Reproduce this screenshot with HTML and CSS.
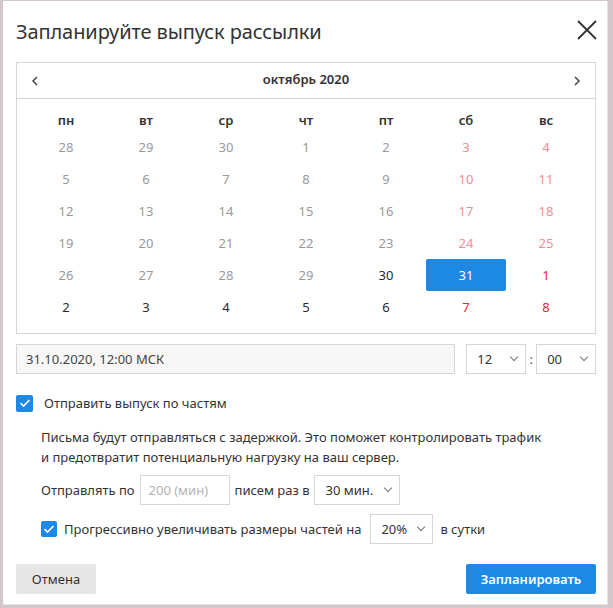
FILE: index.html
```html
<!DOCTYPE html>
<html lang="ru">
<head>
<meta charset="utf-8">
<link rel="stylesheet" href="styles.css">
</head>
<body>
<div class="frame">
  <div class="dialog">
    <div class="head">
      <h1 class="title">Запланируйте выпуск рассылки</h1>
      <svg class="close" width="22" height="22" viewBox="0 0 22 22"><path d="M2 2L20 20M20 2L2 20" stroke="#333" stroke-width="1.8" fill="none"/></svg>
    </div>
    <div class="cal">
      <div class="cal-head">
        <svg class="arr" width="8" height="10" viewBox="0 0 8 10"><path d="M6 1L2 5L6 9" stroke="#444" stroke-width="1.5" fill="none"/></svg>
        <span class="month">октябрь 2020</span>
        <svg class="arr" width="8" height="10" viewBox="0 0 8 10"><path d="M2 1L6 5L2 9" stroke="#444" stroke-width="1.5" fill="none"/></svg>
      </div>
      <div class="grid">
        <div class="wd">пн</div><div class="wd">вт</div><div class="wd">ср</div><div class="wd">чт</div><div class="wd">пт</div><div class="wd">сб</div><div class="wd">вс</div>
        <div class="d off">28</div><div class="d off">29</div><div class="d off">30</div><div class="d off">1</div><div class="d off">2</div><div class="d offw">3</div><div class="d offw">4</div>
        <div class="d off">5</div><div class="d off">6</div><div class="d off">7</div><div class="d off">8</div><div class="d off">9</div><div class="d offw">10</div><div class="d offw">11</div>
        <div class="d off">12</div><div class="d off">13</div><div class="d off">14</div><div class="d off">15</div><div class="d off">16</div><div class="d offw">17</div><div class="d offw">18</div>
        <div class="d off">19</div><div class="d off">20</div><div class="d off">21</div><div class="d off">22</div><div class="d off">23</div><div class="d offw">24</div><div class="d offw">25</div>
        <div class="d off">26</div><div class="d off">27</div><div class="d off">28</div><div class="d off">29</div><div class="d">30</div><div class="d sel">31</div><div class="d we">1</div>
        <div class="d">2</div><div class="d">3</div><div class="d">4</div><div class="d">5</div><div class="d">6</div><div class="d we">7</div><div class="d we">8</div>
      </div>
    </div>
    <div class="dt-row">
      <div class="dt-input">31.10.2020, 12:00 МСК</div>
      <div class="sel-box hh">12<span class="chev"></span></div>
      <span class="colon">:</span>
      <div class="sel-box mm">00<span class="chev"></span></div>
    </div>
    <label class="chk-row">
      <span class="chk"><svg width="12" height="10" viewBox="0 0 12 10"><path d="M1.5 5L4.5 8L10.5 2" stroke="#fff" stroke-width="1.6" fill="none"/></svg></span>
      <span>Отправить выпуск по частям</span>
    </label>
    <div class="parts">
      <p class="note">Письма будут отправляться с задержкой. Это поможет контролировать трафик<br>и предотвратит потенциальную нагрузку на ваш сервер.</p>
      <div class="line">
        <span>Отправлять по</span>
        <div class="num-input">200 (мин)</div>
        <span>писем раз в</span>
        <div class="sel-box every">30 мин.<span class="chev"></span></div>
      </div>
      <div class="line line2">
        <span class="chk small"><svg width="12" height="10" viewBox="0 0 12 10"><path d="M1.5 5L4.5 8L10.5 2" stroke="#fff" stroke-width="1.6" fill="none"/></svg></span>
        <span class="lbl">Прогрессивно увеличивать размеры частей на</span>
        <div class="sel-box pct">20%<span class="chev"></span></div>
        <span>в сутки</span>
      </div>
    </div>
    <div class="foot">
      <button class="btn cancel">Отмена</button>
      <button class="btn ok">Запланировать</button>
    </div>
  </div>
</div>
</body>
</html>
```
FILE: styles.css
```css
html, body { margin: 0; padding: 0; background: #d3c7cb; }
body { width: 613px; height: 608px; font-family: "Noto Sans", "Open Sans", sans-serif; color: #333; }
.frame { box-sizing: border-box; width: 613px; height: 608px; padding: 1px 5px 3px 3px; }
.dialog { box-sizing: border-box; width: 605px; height: 604px; background: #fff; border: 1px solid #e3e3e3; border-left: 0; border-top: 0; padding: 0 11px 0 13px; }
.head { display: flex; justify-content: space-between; align-items: center; height: 61px; }
.title { margin: 0; font-size: 20px; font-weight: 400; color: #333; padding-top: 0; letter-spacing: -0.1px; }
.close { margin-right: -2px; margin-top: -4px; }
.cal { border: 1px solid #d6d6d6; height: 272px; box-sizing: border-box; }
.cal-head { height: 36px; border-bottom: 1px solid #d6d6d6; display: flex; align-items: center; justify-content: space-between; padding: 0 14px 0 14px; box-sizing: border-box; }
.month { font-size: 13px; font-weight: 600; color: #333; margin-top: -3px; }
.grid { display: grid; grid-template-columns: repeat(7, 80px); grid-template-rows: 22px; grid-auto-rows: 32px; padding: 10px 9px 0; }
.wd { font-size: 13px; font-weight: 600; color: #333; display: flex; align-items: center; justify-content: center; }
.d { font-size: 13px; color: #2a2a2a; display: flex; align-items: center; justify-content: center; }
.d.off { color: #9a9a9a; }
.d.offw { color: #f58c93; }
.d.we { color: #e8282f; }
.d.sel { background: #1e88e5; color: #fff; border-radius: 2px; }
.dt-row { display: flex; align-items: center; margin-top: 10px; height: 30px; }
.dt-input { box-sizing: border-box; width: 441px; height: 30px; border: 1px solid #d6d6d6; background: #f7f7f7; font-size: 13px; color: #444; display: flex; align-items: center; padding-left: 9px; }
.sel-box { box-sizing: border-box; height: 30px; border: 1px solid #d6d6d6; background: #fff; font-size: 13px; color: #333; display: flex; align-items: center; justify-content: space-between; padding: 0 8px 0 10px; }
.chev { width: 5px; height: 5px; border-right: 1.3px solid #777; border-bottom: 1.3px solid #777; transform: rotate(45deg); margin-top: -4px; }
.hh { width: 60px; margin-left: 11px; }
.mm { width: 60px; }
.colon { width: 10px; text-align: center; font-size: 13px; color: #555; }
.chk-row { display: flex; align-items: center; margin-top: 20px; font-size: 13px; color: #333; }
.chk { width: 17px; height: 17px; background: #1e88e5; border-radius: 2px; display: inline-flex; align-items: center; justify-content: center; margin-right: 11px; }
.chk.small { width: 16px; height: 16px; margin-right: 7px; }
.parts { padding-left: 25px; font-size: 13px; color: #333; }
.note { margin: 15px 0 0; line-height: 20px; }
.line { display: flex; align-items: center; gap: 5px; margin-top: 8px; }
.num-input { box-sizing: border-box; width: 90px; height: 30px; border: 1px solid #d6d6d6; color: #b4b4b4; display: flex; align-items: center; padding-left: 8px; }
.every { width: 86px; }
.line2 { gap: 0; margin-top: 9px; }
.line2 .lbl { margin-right: 9px; }
.pct { width: 63px; margin-right: 7px; }
.foot { display: flex; justify-content: space-between; margin-top: 20px; }
.btn { height: 30px; border: 0; border-radius: 2px; font-family: inherit; font-size: 13px; padding: 0; }
.cancel { width: 80px; background: #e6e6e6; color: #333; }
.ok { width: 130px; background: #1e88e5; color: #fff; font-weight: 600; }
```
